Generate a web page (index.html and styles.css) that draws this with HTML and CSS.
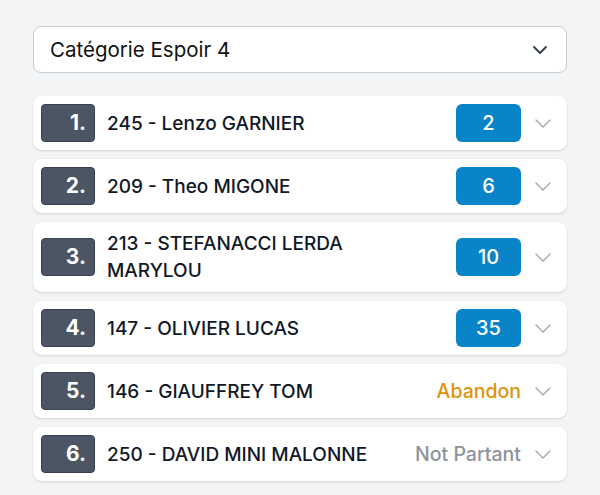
FILE: index.html
```html
<!DOCTYPE html>
<html lang="fr">
<head>
    <meta charset="utf-8">
    <title>Classement</title>
    <link rel="stylesheet" href="styles.css">
</head>
<body>
    <div class="select">
        <span>Catégorie Espoir 4</span>
        <svg class="select-chev" width="20" height="20" viewBox="0 0 20 20"><path d="M4 7l6 6 6-6" fill="none" stroke="#374151" stroke-width="2" stroke-linecap="round" stroke-linejoin="round"/></svg>
    </div>

    <ul class="results">
        <li class="row">
            <span class="rank">1.</span>
            <span class="name">245 - Lenzo GARNIER</span>
            <span class="badge">2</span>
            <svg class="chev" width="20" height="20" viewBox="0 0 20 20"><path d="M3 7l7 7 7-7" fill="none" stroke="#9ca3af" stroke-width="1.3" stroke-linecap="round" stroke-linejoin="round"/></svg>
        </li>
        <li class="row">
            <span class="rank">2.</span>
            <span class="name">209 - Theo MIGONE</span>
            <span class="badge">6</span>
            <svg class="chev" width="20" height="20" viewBox="0 0 20 20"><path d="M3 7l7 7 7-7" fill="none" stroke="#9ca3af" stroke-width="1.3" stroke-linecap="round" stroke-linejoin="round"/></svg>
        </li>
        <li class="row">
            <span class="rank">3.</span>
            <span class="name">213 - STEFANACCI LERDA MARYLOU</span>
            <span class="badge">10</span>
            <svg class="chev" width="20" height="20" viewBox="0 0 20 20"><path d="M3 7l7 7 7-7" fill="none" stroke="#9ca3af" stroke-width="1.3" stroke-linecap="round" stroke-linejoin="round"/></svg>
        </li>
        <li class="row">
            <span class="rank">4.</span>
            <span class="name">147 - OLIVIER LUCAS</span>
            <span class="badge">35</span>
            <svg class="chev" width="20" height="20" viewBox="0 0 20 20"><path d="M3 7l7 7 7-7" fill="none" stroke="#9ca3af" stroke-width="1.3" stroke-linecap="round" stroke-linejoin="round"/></svg>
        </li>
        <li class="row">
            <span class="rank">5.</span>
            <span class="name">146 - GIAUFFREY TOM</span>
            <span class="status abandon">Abandon</span>
            <svg class="chev" width="20" height="20" viewBox="0 0 20 20"><path d="M3 7l7 7 7-7" fill="none" stroke="#9ca3af" stroke-width="1.3" stroke-linecap="round" stroke-linejoin="round"/></svg>
        </li>
        <li class="row">
            <span class="rank">6.</span>
            <span class="name">250 - DAVID MINI MALONNE</span>
            <span class="status absent">Not Partant</span>
            <svg class="chev" width="20" height="20" viewBox="0 0 20 20"><path d="M3 7l7 7 7-7" fill="none" stroke="#9ca3af" stroke-width="1.3" stroke-linecap="round" stroke-linejoin="round"/></svg>
        </li>
    </ul>
</body>
</html>
```

FILE: styles.css
```css
body {
    margin: 0;
    padding: 26px 33px;
    background-color: #f3f4f6;
    font-family: Inter, "Noto Sans", sans-serif;
    color: #111827;
}

.select {
    display: flex;
    align-items: center;
    justify-content: space-between;
    height: 45px;
    padding: 0 16px;
    background: #fff;
    border: 1px solid #c9ccd2;
    border-radius: 8px;
    font-size: 20.5px;
    color: #111;
}

.results {
    list-style: none;
    margin: 23px 0 0;
    padding: 0;
    display: flex;
    flex-direction: column;
    gap: 9px;
}

.row {
    display: flex;
    align-items: center;
    padding: 8px 14px 8px 8px;
    background: #fff;
    border-radius: 9px;
    box-shadow: 0 1px 3px rgba(0, 0, 0, 0.1), 0 1px 2px rgba(0, 0, 0, 0.04);
}

.rank {
    flex: none;
    box-sizing: border-box;
    width: 54px;
    height: 38px;
    padding-right: 8px;
    background: #4b5563;
    border: 1px solid #374151;
    border-radius: 4px;
    color: #fff;
    font-size: 21px;
    font-weight: 700;
    line-height: 36px;
    text-align: right;
}

.name {
    flex: 1;
    margin-left: 12px;
    padding-right: 24px;
    font-size: 19px;
    font-weight: 500;
    line-height: 27px;
}

.badge {
    flex: none;
    width: 65px;
    height: 38px;
    background: #0a84c8;
    border-radius: 6px;
    color: #fff;
    font-size: 20px;
    font-weight: 500;
    line-height: 38px;
    text-align: center;
}

.status {
    font-size: 19.5px;
    font-weight: 500;
}

.abandon {
    color: #e0920c;
}

.absent {
    color: #8d939c;
}

.chev {
    flex: none;
    margin-left: 12px;
}
```
